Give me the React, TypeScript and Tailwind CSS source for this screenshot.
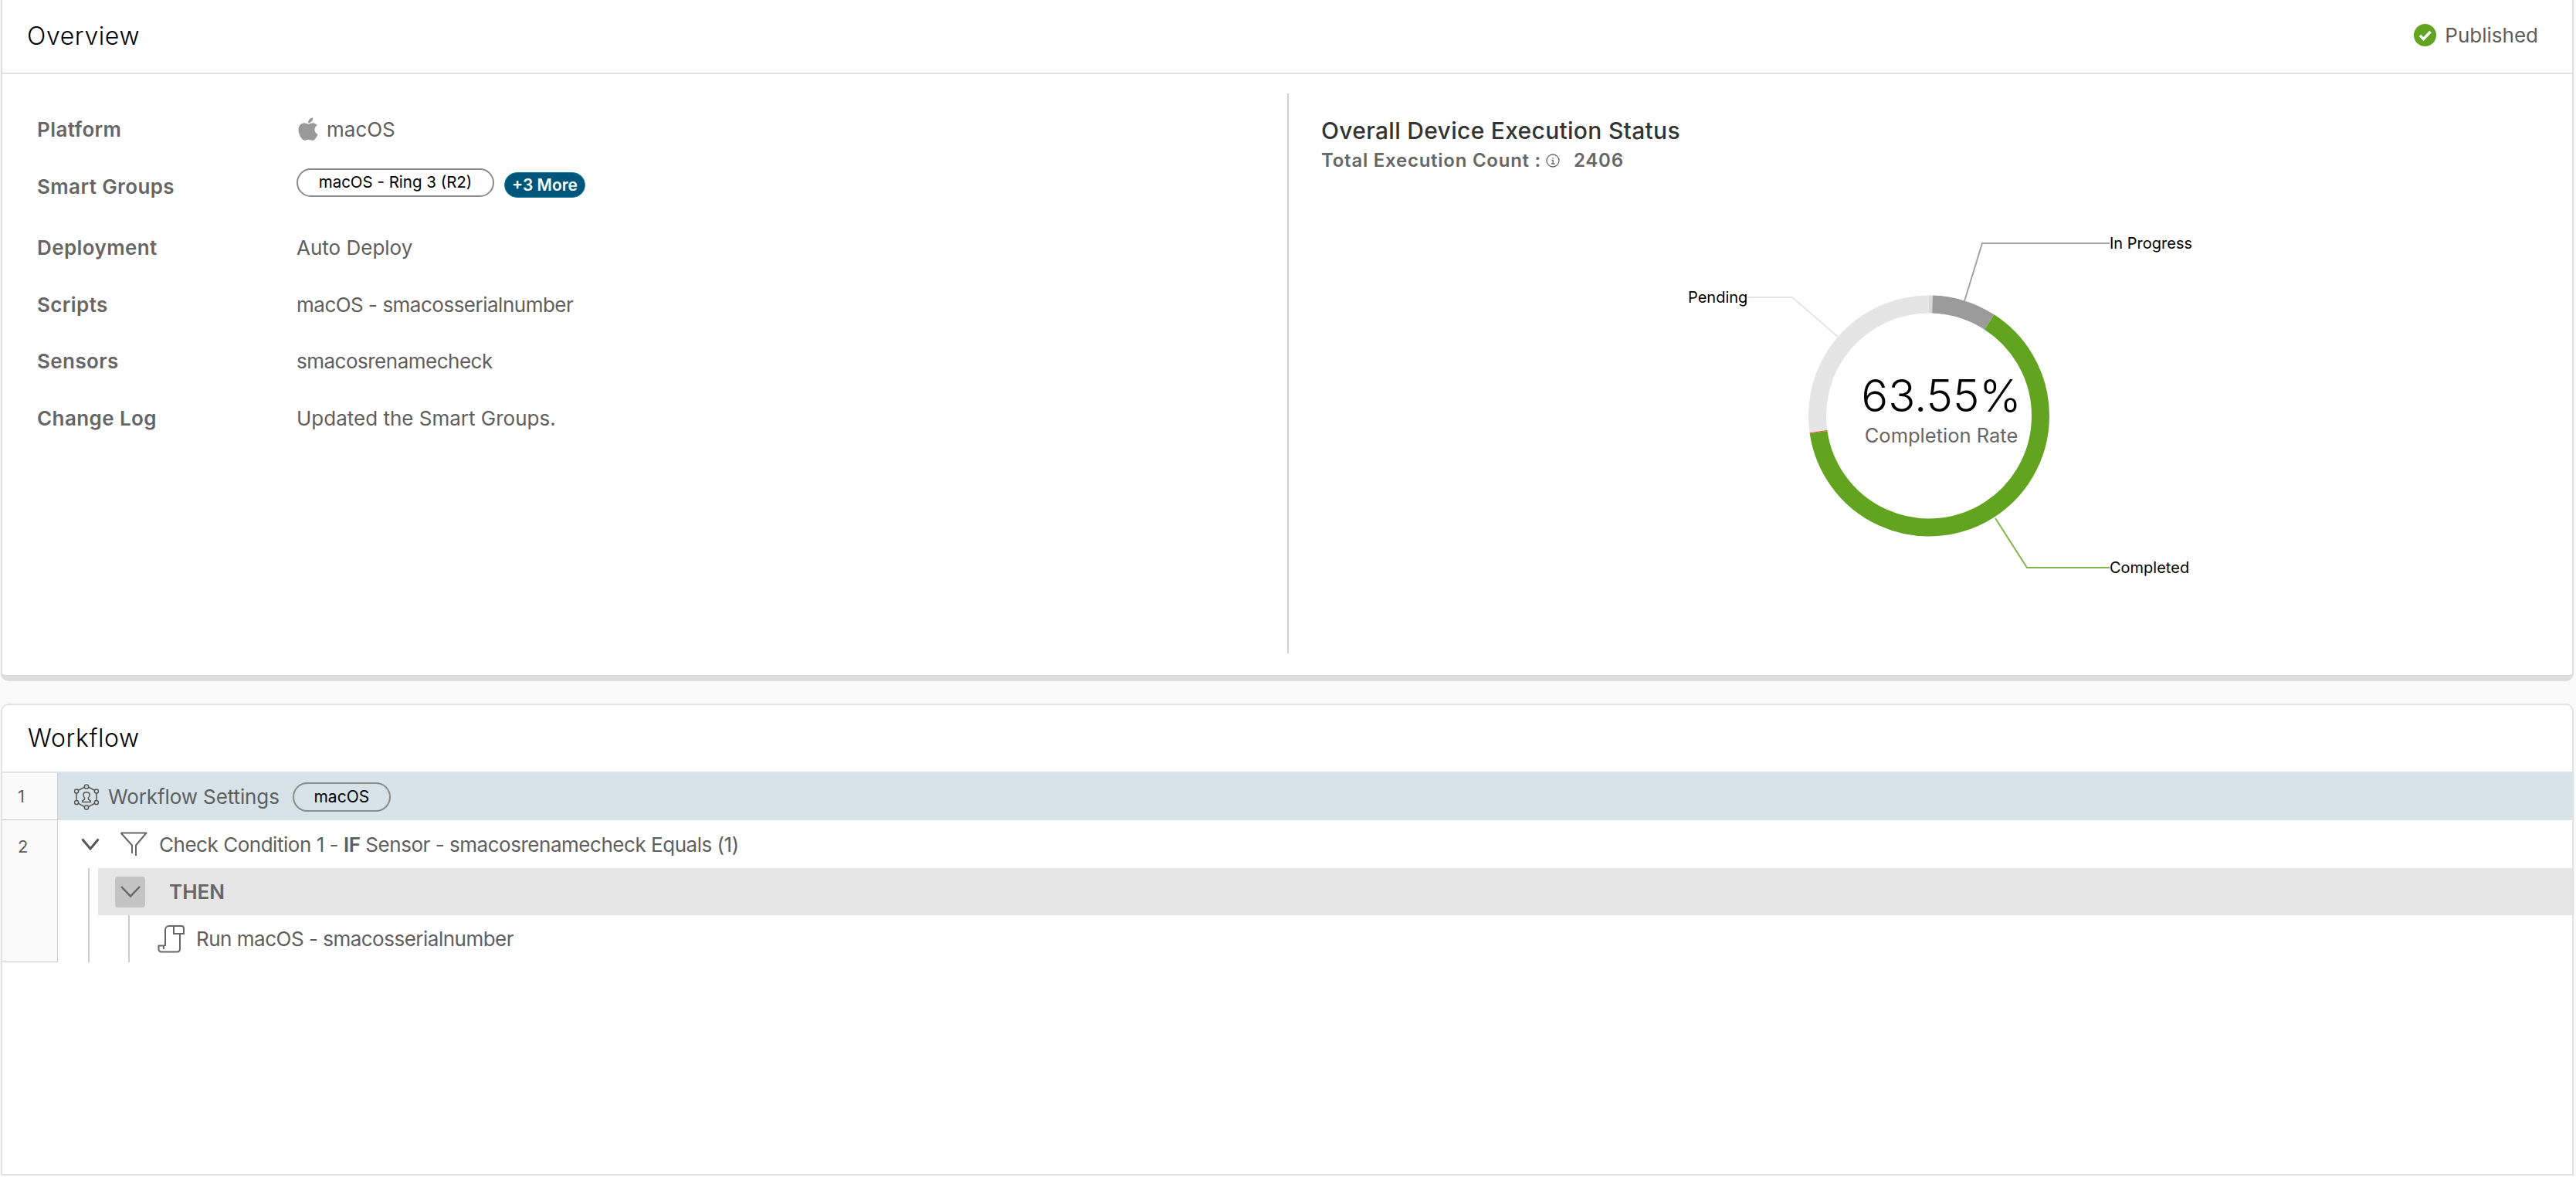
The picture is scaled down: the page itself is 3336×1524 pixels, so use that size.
import { FaApple } from 'react-icons/fa';

const rows = [
  { label: 'Deployment', value: 'Auto Deploy', height: 'h-[74px]', spacing: '' },
  { label: 'Scripts', value: 'macOS - smacosserialnumber', height: 'h-[74px]', spacing: 'tracking-[-0.5px]' },
  { label: 'Sensors', value: 'smacosrenamecheck', height: 'h-[73px]', spacing: 'tracking-[-0.5px]' },
  { label: 'Change Log', value: 'Updated the Smart Groups.', height: 'h-[74px]', spacing: '' },
];

// donut geometry, in page pixels
const CX = 2498;
const CY = 537.5;
const R = 144.5;

const point = (deg: number) => {
  const rad = (deg * Math.PI) / 180;
  return `${CX + R * Math.sin(rad)} ${CY - R * Math.cos(rad)}`;
};

const arc = (from: number, to: number) =>
  `M${point(from)}A${R} ${R} 0 ${to - from > 180 ? 1 : 0} 1 ${point(to)}`;

const segments = [
  { from: 262, to: 359.9, color: '#e5e5e5' },
  { from: 0, to: 1.8, color: '#d9d9d9' },
  { from: 1.8, to: 32.8, color: '#9b9b9b' },
  { from: 32.8, to: 261.6, color: '#62a420' },
  { from: 261.6, to: 262, color: '#e3572b' },
];

const Label = ({ text }: { text: string }) => (
  <div className="w-[336px] text-[26px] font-semibold tracking-[0.4px] text-[#666]">{text}</div>
);

const Donut = () => (
  <svg width="680" height="450" viewBox="2180 300 680 450" className="ml-[469px] mt-[73px]">
    {segments.map((s) => (
      <path key={s.from} d={arc(s.from, s.to)} fill="none" stroke={s.color} strokeWidth="23" />
    ))}
    <polyline points="2263,384 2321,384 2380,435" fill="none" stroke="#e5e5e5" strokeWidth="2" />
    <polyline points="2544,389 2567,314 2732,314" fill="none" stroke="#a3a3a3" strokeWidth="2" />
    <polyline points="2584,670 2625,734 2732,734" fill="none" stroke="#7fb54a" strokeWidth="2" />
    <text x="2186" y="391" fontSize="20" fill="#000">Pending</text>
    <text x="2732" y="321" fontSize="20" fill="#000">In Progress</text>
    <text x="2732" y="741" fontSize="20" fill="#000">Completed</text>
    <text x="2514" y="532" fontSize="58" fontWeight="300" textAnchor="middle" fill="#000">63.55%</text>
    <text x="2514" y="572" fontSize="25.5" textAnchor="middle" fill="#666">Completion Rate</text>
  </svg>
);

const SettingsIcon = () => (
  <svg width="32" height="34" viewBox="0 0 32 34" fill="none" stroke="#565656" strokeWidth="1.5">
    <path d="M16 3 29 9.5V24L16 31 3 24V9.5Z" />
    <g fill="#d8e3e9">
      <circle cx="16" cy="3.5" r="2.6" />
      <circle cx="29" cy="9.5" r="2.6" />
      <circle cx="29" cy="24" r="2.6" />
      <circle cx="16" cy="30.5" r="2.6" />
      <circle cx="3" cy="24" r="2.6" />
      <circle cx="3" cy="9.5" r="2.6" />
    </g>
    <path d="M13.6 18c-1.3-1.2-1.9-3-1.6-4.7.3-1.7 2-2.6 4-2.6s3.7.9 4 2.6c.3 1.7-.3 3.5-1.6 4.7v1.8l3 2.4v1.3H10.600v-1.3l3-2.4Z" strokeLinejoin="round" />
  </svg>
);

const FunnelIcon = () => (
  <svg width="36" height="32" viewBox="0 0 36 32" fill="none" stroke="#666" strokeWidth="2">
    <path d="M1.500 1.500H34.500L21 17.500V31M16 28V17.500L1.500 1.500" strokeLinejoin="round" />
  </svg>
);

const ScrollIcon = () => (
  <svg width="35" height="36" viewBox="0 0 35 36" fill="none" stroke="#666" strokeWidth="2">
    <path d="M10 27V6a5 5 0 0 1 5-5h16a3 3 0 0 1 3 3v7H21V2" />
    <path d="M29 11v20a3.500 3.500 0 0 1-3.500 3.500H5A3.500 3.500 0 0 1 1.500 31v-4.500H8V31" />
  </svg>
);

export default function App() {
  return (
    <div className="flex h-[1524px] w-[3336px] flex-col bg-[#fafafa] pl-[1px] pr-[3px] font-['Inter','Liberation_Sans',sans-serif] text-[#5e5e5e]">
      {/* Overview */}
      <section className="h-[882px] rounded-b-[10px] border-x-2 border-b-[8px] border-[#dedede] bg-white">
        <header className="flex h-[96px] items-center justify-between border-b-2 border-[#e2e2e2] pl-[32px] pr-[44px]">
          <h2 className="text-[32px] font-light tracking-[0.6px] text-black">Overview</h2>
          <div className="mb-[4px] flex items-center gap-[11px]">
            <svg width="29" height="29" viewBox="0 0 29 29">
              <circle cx="14.500" cy="14.500" r="14.500" fill="#62a420" />
              <path d="M8 15l4.500 4.500L21.500 10" fill="none" stroke="#fff" strokeWidth="3.500" />
            </svg>
            <span className="text-[26px]">Published</span>
          </div>
        </header>
        <div className="flex">
          <div className="h-[700px] w-[1664px] pl-[45px] pt-[35px]">
            <div className="flex h-[72px] items-center">
              <Label text="Platform" />
              <FaApple className="ml-[-2px] mr-[7px] text-[34px] text-[#999]" />
              <span className="text-[26px]">macOS</span>
            </div>
            <div className="flex h-[80px] items-start">
              <div className="flex h-[76px] items-center">
                <Label text="Smart Groups" />
              </div>
              <div className="mt-[15px] flex h-[37px] w-[256px] items-center justify-center rounded-full border-2 border-[#8c8c8c] text-[20.5px] text-black">
                macOS - Ring 3 (R2)
              </div>
              <div className="ml-[13px] mt-[20px] flex h-[33px] w-[105px] items-center justify-center rounded-full border border-[#0a7aa0] bg-[#00567a] text-[21px] font-semibold text-white">
                +3 More
              </div>
            </div>
            {rows.map((row) => (
              <div key={row.label} className={`flex items-center ${row.height}`}>
                <Label text={row.label} />
                <div className={`text-[26px] ${row.spacing}`}>{row.value}</div>
              </div>
            ))}
          </div>
          <div className="mt-[25px] h-[725px] flex-1 border-l-2 border-[#d0d0d0] pl-[42px] pt-[29px]">
            <h3 className="text-[30px] font-medium leading-[38px] tracking-[0.3px] text-[#333]">Overall Device Execution Status</h3>
            <div className="flex h-[40px] items-center text-[24px] font-semibold tracking-[0.75px] text-[#666]">
              Total Execution Count :
              <svg width="18" height="18" viewBox="0 0 18 18" fill="none" stroke="#666" strokeWidth="1.300" className="ml-[6px] mr-[18px]">
                <circle cx="9" cy="9" r="8" />
                <path d="M9 5v1.500M7.500 8.500H9.200V13M7 13h4.500" />
              </svg>
              2406
            </div>
            <Donut />
          </div>
        </div>
      </section>

      {/* Workflow */}
      <section className="mt-[29px] h-[611px] rounded-t-[10px] border-x-2 border-y-2 border-[#e2e2e2] bg-white">
        <header className="flex h-[86px] items-center pl-[33px]">
          <h2 className="text-[32px] font-light tracking-[0.6px] text-black">Workflow</h2>
        </header>
        <div className="flex h-[63px] border-t-2 border-[#e2e2e2]">
          <div className="flex w-[72px] items-center border-b border-r border-[#ccc] bg-[#fafafa] pl-[20px] text-[22px]">1</div>
          <div className="flex flex-1 items-center bg-[#d8e3e9] pl-[21px]">
            <SettingsIcon />
            <span className="ml-[12px] text-[26px] tracking-[-0.1px]">Workflow Settings</span>
            <div className="ml-[17px] flex h-[38px] w-[127px] items-center justify-center rounded-full border-2 border-[#8c8c8c] text-[21px] text-black">
              macOS
            </div>
          </div>
        </div>
        <div className="flex">
          <div className="h-[184px] w-[72px] border-b border-r border-[#ccc] bg-[#fafafa] pl-[20px] pt-[18px] text-[22px]">2</div>
          <div className="flex-1">
            <div className="flex h-[62px] items-center pl-[30px]">
              <svg width="24" height="16" viewBox="0 0 24 16" fill="none" stroke="#565656" strokeWidth="3">
                <path d="M1.500 1.500 12 14 22.500 1.500" />
              </svg>
              <span className="ml-[26px]"><FunnelIcon /></span>
              <span className="ml-[15px] text-[26px] tracking-[-0.47px]">
                Check Condition 1 - <b className="font-semibold">IF</b> Sensor - smacosrenamecheck Equals (1)
              </span>
            </div>
            <div className="ml-[39px] border-l-2 border-[#ccc] pl-[11px]">
              <div className="flex h-[61px] items-center bg-[#e6e6e6] pl-[22px]">
                <div className="flex h-[40px] w-[39px] items-center justify-center rounded-[4px] bg-[#c4c4c4]">
                  <svg width="26" height="15" viewBox="0 0 26 15" fill="none" stroke="#666" strokeWidth="2.500">
                    <path d="M1 1 13 13.500 25 1" />
                  </svg>
                </div>
                <span className="ml-[31px] text-[26px] font-semibold text-[#666]">THEN</span>
              </div>
              <div className="ml-[39px] flex h-[61px] items-center border-l-2 border-[#ccc] pl-[36px]">
                <ScrollIcon />
                <span className="ml-[15px] text-[26px] tracking-[-0.5px]">Run macOS - smacosserialnumber</span>
              </div>
            </div>
          </div>
        </div>
      </section>
    </div>
  );
}
